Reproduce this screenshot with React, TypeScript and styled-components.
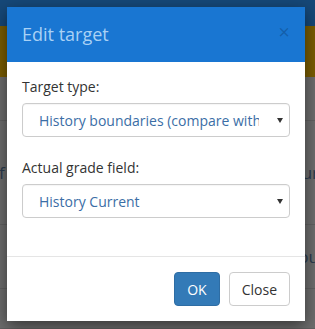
import React from 'react';
import styled, { createGlobalStyle } from 'styled-components';

const GlobalStyle = createGlobalStyle`
  html, body {
    margin: 0;
    padding: 0;
    background: #6d6d6d;
    font-family: "Open Sans", "Liberation Sans", Arial, sans-serif;
    overflow: hidden;
  }
  * { box-sizing: border-box; }
`;

const Page = styled.div`
  position: relative;
  width: 315px;
  height: 329px;
  overflow: hidden;
  background: #6d6d6d;
`;

const TopBar = styled.div`
  height: 26px;
  background: #164878;
`;

const Banner = styled.div`
  height: 51px;
  background: #7a5d02;
`;

const Row = styled.div<{ h: number }>`
  height: ${p => p.h}px;
  border-bottom: 1px solid #616161;
  display: flex;
  align-items: center;
  justify-content: space-between;
  font-size: 17px;
  color: #2b3b4d;
  margin-left: -6px;
  margin-right: -4px;
`;

const Backdrop = styled.div`
  position: absolute;
  inset: 0;
`;

const Modal = styled.div`
  position: absolute;
  left: 7px;
  top: 7px;
  width: 298px;
  background: #fff;
  box-shadow: 0 5px 15px rgba(0, 0, 0, 0.5);
  display: flex;
  flex-direction: column;
`;

const Header = styled.div`
  height: 55px;
  background: #1976d2;
  display: flex;
  align-items: center;
  justify-content: space-between;
  padding: 0 15px;
`;

const Title = styled.h4`
  margin: 0;
  font-size: 18px;
  font-weight: 400;
  color: #a9d1f5;
  line-height: 22px;
  padding-bottom: 1px;
`;

const CloseX = styled.button`
  border: 0;
  background: none;
  padding: 0;
  margin-top: -6px;
  font-family: "Liberation Sans", Arial, sans-serif;
  font-size: 20px;
  font-weight: 400;
  line-height: 1;
  color: rgba(0, 0, 0, 0.2);
  cursor: pointer;
`;

const Body = styled.div`
  padding: 15px 15px 23px;
`;

const Group = styled.div`
  margin-bottom: 21px;
  &:last-child { margin-bottom: 15px; }
`;

const Label = styled.label`
  display: block;
  font-size: 14px;
  line-height: 20px;
  color: #333;
  margin-bottom: 6px;
`;

const SelectWrap = styled.div`
  position: relative;
`;

const Select = styled.select`
  appearance: none;
  width: 100%;
  height: 34px;
  border: 1px solid #ccc;
  border-radius: 4px;
  background: #fff;
  padding: 0 30px 0 16px;
  font-family: "Open Sans", "Liberation Sans", Arial, sans-serif;
  font-size: 14px;
  color: #3b6ea6;
  box-shadow: inset 0 1px 1px rgba(0, 0, 0, 0.04);
`;

const Caret = styled.svg`
  position: absolute;
  right: 7px;
  top: 15px;
  pointer-events: none;
`;

const Footer = styled.div`
  border-top: 1px solid #e5e5e5;
  padding: 15px;
  display: flex;
  justify-content: flex-end;
  gap: 9px;
`;

const Btn = styled.button<{ primary?: boolean }>`
  height: 34px;
  padding: 0 12px;
  font-family: "Open Sans", "Liberation Sans", Arial, sans-serif;
  font-size: 14px;
  border-radius: 4px;
  border: 1px solid ${p => (p.primary ? '#2e6da4' : '#ccc')};
  background: ${p => (p.primary ? '#337ab7' : '#fff')};
  color: ${p => (p.primary ? '#fff' : '#333')};
  cursor: pointer;
`;

const Arrow = () => (
  <Caret width="6" height="5" viewBox="0 0 6 5">
    <path d="M0 0 L6 0 L3 5 Z" fill="#333" />
  </Caret>
);

export default function App() {
  return (
    <Page>
      <GlobalStyle />
      <TopBar />
      <Banner />
      <Row h={44}><span /><span /></Row>
      <Row h={104}><span>(f</span><span>ur</span></Row>
      <Row h={64}><span /><span>ou</span></Row>
      <Row h={40}><span /><span /></Row>
      <Backdrop>
        <Modal>
          <Header>
            <Title>Edit target</Title>
            <CloseX aria-label="Close">×</CloseX>
          </Header>
          <Body>
            <Group>
              <Label>Target type:</Label>
              <SelectWrap>
                <Select defaultValue="hb">
                  <option value="hb">History boundaries (compare with current)</option>
                </Select>
                <Arrow />
              </SelectWrap>
            </Group>
            <Group>
              <Label>Actual grade field:</Label>
              <SelectWrap>
                <Select defaultValue="hc">
                  <option value="hc">History Current</option>
                </Select>
                <Arrow />
              </SelectWrap>
            </Group>
          </Body>
          <Footer>
            <Btn primary>OK</Btn>
            <Btn>Close</Btn>
          </Footer>
        </Modal>
      </Backdrop>
    </Page>
  );
}
